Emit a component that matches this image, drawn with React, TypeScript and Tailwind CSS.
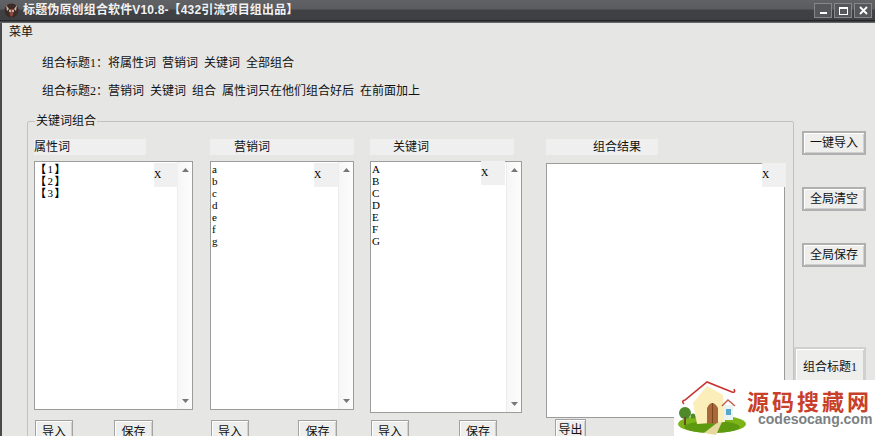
import React from 'react';

const WORDS_1 = ['【1】', '【2】', '【3】'];
const WORDS_2 = ['a', 'b', 'c', 'd', 'e', 'f', 'g'];
const WORDS_3 = ['A', 'B', 'C', 'D', 'E', 'F', 'G'];

const Btn: React.FC<{ className?: string; children: React.ReactNode }> = ({ className = '', children }) => (
  <button className={`flex items-center justify-center bg-[#eeeeec] border border-[#a2a2a2] shadow-[inset_1px_1px_0_#fff,inset_-1px_-1px_0_#d0d0d0] text-[12px] leading-none text-[#111] ${className}`}>
    {children}
  </button>
);

const Arrow: React.FC<{ up?: boolean }> = ({ up }) => (
  <svg width="7" height="4" viewBox="0 0 7 4">
    <path d={up ? 'M3.5 0 L7 4 L0 4 Z' : 'M0 0 L7 0 L3.5 4 Z'} fill="#777" />
  </svg>
);

const ListBox: React.FC<{ items: string[]; className: string; chip: string; bold?: boolean }> = ({ items, className, chip, bold }) => (
  <div className={`relative flex bg-white border border-[#9c9c9c] ${className}`}>
    <div className="flex-1 pl-[1px] pt-[1px] text-[11px] leading-[12px] text-black">
      {items.map((w) =>
        bold ? (
          <div key={w} className="-ml-[1px] tracking-[1.5px]">
            <span className="font-bold">{w[0]}</span>
            {w[1]}
            <span className="font-bold">{w[2]}</span>
          </div>
        ) : (
          <div key={w}>{w}</div>
        )
      )}
    </div>
    <div className="w-[15px] flex flex-col items-center justify-between py-[6px] bg-gradient-to-r from-[#f6f6f6] to-[#fdfdfd] border-l border-[#ececec]">
      <Arrow up />
      <Arrow />
    </div>
    <Chip className={chip} />
  </div>
);

// the little X that floats over each list
const Chip: React.FC<{ className: string }> = ({ className }) => (
  <div className={`absolute w-[24px] h-[24px] bg-[#f0f0f0] flex items-center justify-start text-[10px] leading-none text-black ${className}`}>
    X
  </div>
);

const WinBtn: React.FC<{ children: React.ReactNode; className?: string }> = ({ children, className = '' }) => (
  <div className={`w-[18px] h-[15px] flex items-center justify-center bg-[#55575b] border border-[#85878b] ${className}`}>
    {children}
  </div>
);

const AppIcon = () => (
  <svg width="15" height="15" viewBox="0 0 15 15">
    <ellipse cx="7.5" cy="7.5" rx="7" ry="7" fill="#3b2a28" />
    <path d="M2 2 L5 6 L3 8 Z M13 2 L10 6 L12 8 Z" fill="#c9b5a0" />
    <path d="M5 6 L10 6 L9 12 L7.5 14 L6 12 Z" fill="#8e4a3a" />
    <circle cx="6" cy="8" r="1" fill="#e8d8c0" />
    <circle cx="9" cy="8" r="1" fill="#e8d8c0" />
  </svg>
);

const House = () => (
  <svg width="73" height="56" viewBox="0 0 73 56">
    <ellipse cx="38" cy="44" rx="34" ry="9" fill="#7cb518" />
    <ellipse cx="38" cy="47" rx="28" ry="6" fill="#5d9a10" />
    <path d="M30 53 L44 42 L48 42 L42 55 Z" fill="#e6d9a0" />
    <circle cx="11" cy="33" r="6" fill="#4f8a2a" />
    <circle cx="19" cy="36" r="2.5" fill="#4f8a2a" />
    <rect x="10" y="37" width="2" height="8" fill="#6b4a2a" />
    <path d="M19 23 L33 6 L49 15 L51 42 L23 44 Z" fill="#fbeeb8" />
    <path d="M33 44 L33 28 Q38 18 44 28 L44 43 Z" fill="#a8683a" />
    <path d="M38.5 23 L38.5 43" stroke="#7a4520" strokeWidth="1" />
    <rect x="50" y="25" width="9" height="15" fill="#e9f3f2" />
    <rect x="52" y="29" width="5" height="6" fill="#5aa6c8" />
    <path d="M48 26 L54 20 L61 26" fill="none" stroke="#c65a4a" strokeWidth="1.4" />
    <path d="M10 24 Q7 21 11 20 L33 2 L58 12 Q62 13 60 9" fill="none" stroke="#c9322c" strokeWidth="1.6" />
  </svg>
);

export default function App() {
  return (
    <div className="relative w-[875px] h-[436px] overflow-hidden flex flex-col bg-[#e6e6e4] font-['Liberation_Serif','Noto_Sans_CJK_SC',serif] text-[#111]">
      {/* title bar */}
      <div className="h-[23px] shrink-0 flex items-start justify-between bg-[linear-gradient(#606266_0%,#5a5c60_38%,#3f4145_45%,#3d3f43_85%,#1f2022_90%,#77797b_100%)]">
        <div className="flex items-center h-[20px] pl-[4px]">
          <AppIcon />
          <span className="ml-[4px] text-[12px] font-bold tracking-[0.15px] text-[#f2f2f2] font-['Liberation_Sans','Noto_Sans_CJK_SC',sans-serif]">
            标题伪原创组合软件V10.8-【432引流项目组出品】
          </span>
        </div>
        <div className="flex gap-[2px] pt-[3px] pr-[3px]">
          <WinBtn>
            <div className="w-[7px] h-[2px] bg-white mt-[5px]" />
          </WinBtn>
          <WinBtn>
            <div className="w-[9px] h-[8px] border border-white border-t-2" />
          </WinBtn>
          <WinBtn>
            <svg width="9" height="9" viewBox="0 0 9 9">
              <path d="M1 1 L8 8 M8 1 L1 8" stroke="#fff" strokeWidth="1.8" />
            </svg>
          </WinBtn>
        </div>
      </div>

      {/* body */}
      <div className="flex-1 flex flex-col border-l-2 border-[#4a4a4a] text-[12px] [word-spacing:3px]">
        <div className="h-[18px] pl-[7px] leading-[18px]">菜单</div>
        <div className="mt-[13px] pl-[40px] h-[18px] leading-[18px]">组合标题1：将属性词 营销词 关键词 全部组合</div>
        <div className="mt-[10px] pl-[40px] h-[18px] leading-[18px]">组合标题2：营销词 关键词 组合 属性词只在他们组合好后 在前面加上</div>

        <div className="mt-[13px] flex items-start">
          <fieldset className="ml-[25px] w-[767px] h-[340px] border border-[#c2c2c2] rounded-[2px]">
            <legend className="ml-[7px] px-[1px] h-[16px] leading-[16px] text-[12px]">关键词组合</legend>
            <div className="flex items-start mt-[10px]">
              {/* 属性词 */}
              <div className="ml-[6px] w-[159px] shrink-0">
                <div className="w-[112px] h-[16px] bg-[#efefef] leading-[16px]">属性词</div>
                <ListBox items={WORDS_1} bold className="mt-[6px] w-[159px] h-[249px]" chip="left-[119px] top-[1px]" />
                <div className="mt-[10px] flex">
                  <Btn className="ml-[1px] w-[38px] h-[24px]">导入</Btn>
                  <Btn className="ml-[41px] w-[39px] h-[24px]">保存</Btn>
                </div>
              </div>
              {/* 营销词 */}
              <div className="ml-[17px] w-[144px] shrink-0">
                <div className="w-[144px] h-[16px] bg-[#efefef] leading-[16px] pl-[24px]">营销词</div>
                <ListBox items={WORDS_2} className="mt-[6px] w-[144px] h-[249px]" chip="left-[103px] top-[1px]" />
                <div className="mt-[10px] flex">
                  <Btn className="ml-[1px] w-[38px] h-[24px]">导入</Btn>
                  <Btn className="ml-[49px] w-[39px] h-[24px]">保存</Btn>
                </div>
              </div>
              {/* 关键词 */}
              <div className="ml-[16px] w-[152px] shrink-0">
                <div className="w-[144px] h-[16px] bg-[#efefef] leading-[16px] pl-[23px]">关键词</div>
                <ListBox items={WORDS_3} className="mt-[6px] w-[152px] h-[252px]" chip="left-[110px] top-[-1px]" />
                <div className="mt-[7px] flex">
                  <Btn className="ml-[1px] w-[38px] h-[24px]">导入</Btn>
                  <Btn className="ml-[50px] w-[38px] h-[24px]">保存</Btn>
                </div>
              </div>
              {/* 组合结果 */}
              <div className="ml-[24px] w-[240px] shrink-0">
                <div className="w-[112px] h-[16px] bg-[#efefef] leading-[16px] pl-[47px]">组合结果</div>
                <div className="relative mt-[8px] w-[239px] h-[255px] bg-white border border-[#9c9c9c]">
                  <Chip className="left-[215px] top-[-1px]" />
                </div>
                <Btn className="ml-[9px] mt-[1px] w-[31px] h-[22px]">导出</Btn>
              </div>
            </div>
          </fieldset>

          {/* right side buttons */}
          <div className="flex flex-col w-[72px]">
            <Btn className="ml-[8px] mt-[18px] w-[64px] h-[24px] border-2 border-[#b0b0b0]">一键导入</Btn>
            <Btn className="ml-[8px] mt-[32px] w-[64px] h-[24px] border-2 border-[#b0b0b0]">全局清空</Btn>
            <Btn className="ml-[8px] mt-[32px] w-[64px] h-[24px] border-2 border-[#b0b0b0]">全局保存</Btn>
            <Btn className="mt-[80px] w-[72px] h-[40px] border-2 border-[#d0d0d0]">组合标题1</Btn>
          </div>
        </div>
      </div>

      {/* watermark logo */}
      <div className="absolute right-0 bottom-0 w-[201px] h-[56px] bg-white flex items-start">
        <House />
        <div className="flex flex-col items-start [word-spacing:0]">
          <div className="mt-[9px] text-[22px] leading-[22px] font-bold tracking-[3px] text-[#c8402a] font-['Noto_Sans_CJK_SC',sans-serif]">源码搜藏网</div>
          <div className="ml-[11px] mt-[1px] text-[14px] leading-[14px] font-bold text-[#7b8082] font-['Liberation_Sans',sans-serif]">codesocang.com</div>
        </div>
      </div>
    </div>
  );
}
